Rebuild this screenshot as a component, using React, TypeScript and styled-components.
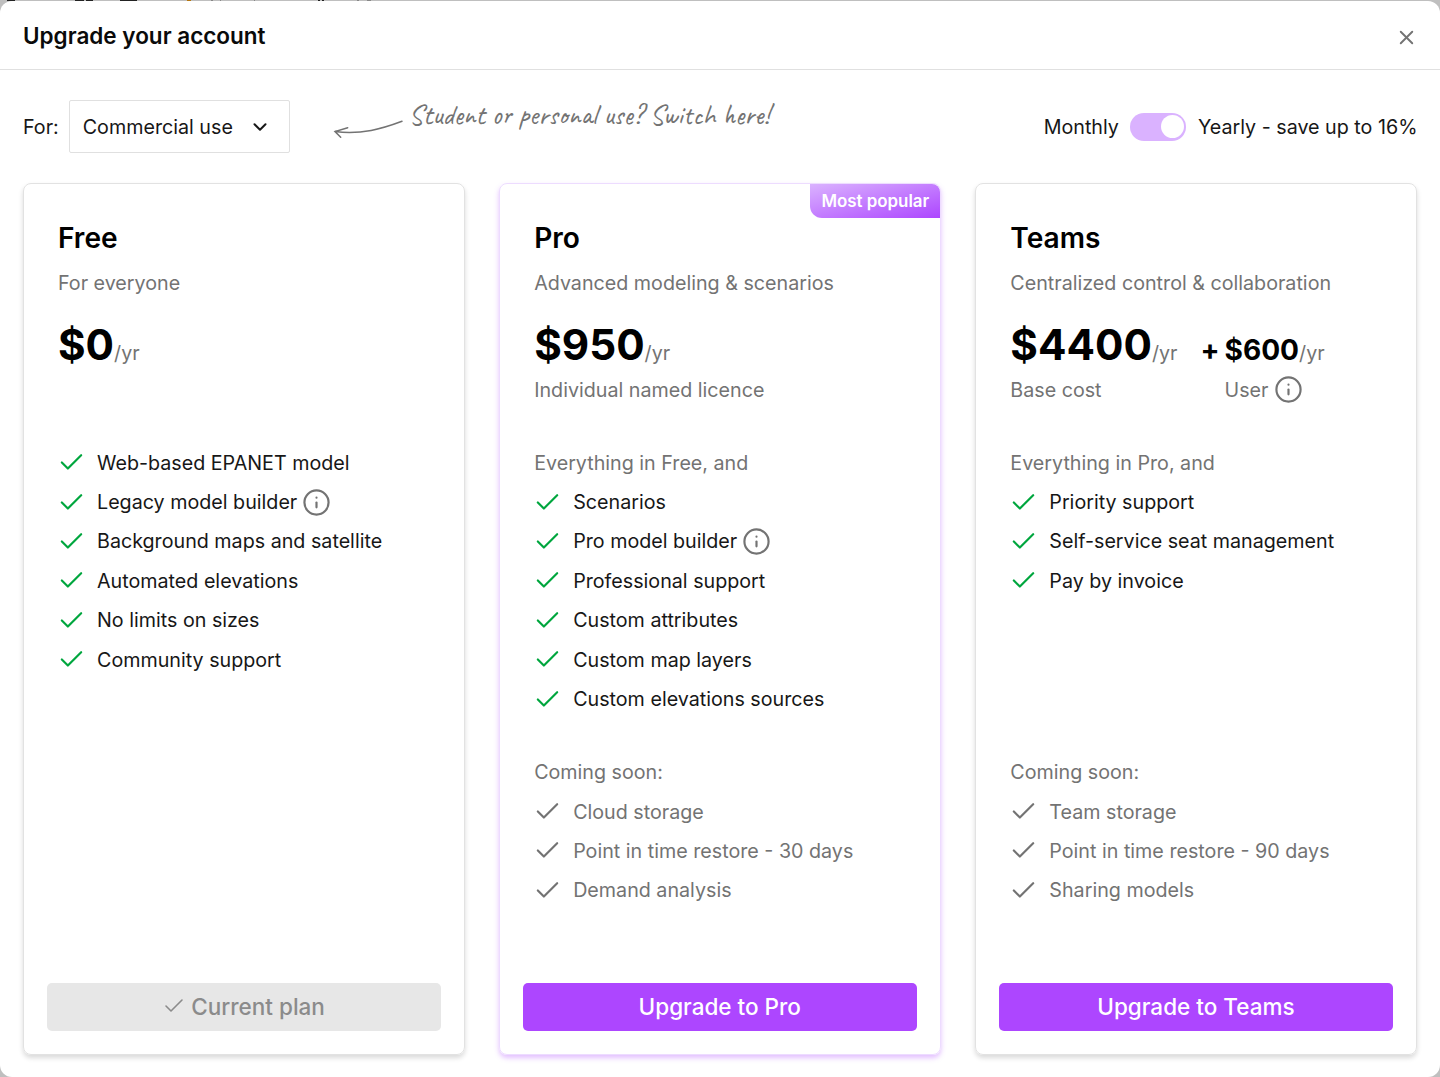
import React from "react";
import styled, { createGlobalStyle } from "styled-components";
import { Check, ChevronDown, Info, X } from "lucide-react";

interface Feature {
  label: string;
  info?: boolean;
}

interface Plan {
  name: string;
  description: string;
  price: string;
  priceNote?: string;
  seatPrice?: string;
  intro?: string;
  features: Feature[];
  upcoming?: string[];
  action: string;
  popular?: boolean;
  current?: boolean;
}

const plans: Plan[] = [
  {
    name: "Free",
    description: "For everyone",
    price: "$0",
    features: [
      { label: "Web-based EPANET model" },
      { label: "Legacy model builder", info: true },
      { label: "Background maps and satellite" },
      { label: "Automated elevations" },
      { label: "No limits on sizes" },
      { label: "Community support" },
    ],
    action: "Current plan",
    current: true,
  },
  {
    name: "Pro",
    description: "Advanced modeling & scenarios",
    price: "$950",
    priceNote: "Individual named licence",
    intro: "Everything in Free, and",
    features: [
      { label: "Scenarios" },
      { label: "Pro model builder", info: true },
      { label: "Professional support" },
      { label: "Custom attributes" },
      { label: "Custom map layers" },
      { label: "Custom elevations sources" },
    ],
    upcoming: [
      "Cloud storage",
      "Point in time restore - 30 days",
      "Demand analysis",
    ],
    action: "Upgrade to Pro",
    popular: true,
  },
  {
    name: "Teams",
    description: "Centralized control & collaboration",
    price: "$4400",
    priceNote: "Base cost",
    seatPrice: "$600",
    intro: "Everything in Pro, and",
    features: [
      { label: "Priority support" },
      { label: "Self-service seat management" },
      { label: "Pay by invoice" },
    ],
    upcoming: [
      "Team storage",
      "Point in time restore - 90 days",
      "Sharing models",
    ],
    action: "Upgrade to Teams",
  },
];

const InfoIcon = () => <Info size={29} strokeWidth={1.8} color={muted} />;

const PlanCard: React.FC<{ plan: Plan }> = ({ plan }) => (
  <Card $popular={plan.popular}>
    {plan.popular && <Badge>Most popular</Badge>}
    <PlanName>{plan.name}</PlanName>
    <Description>{plan.description}</Description>
    <Prices>
      <div>
        <PriceLine>
          <Price>{plan.price}</Price>
          <Period>/yr</Period>
        </PriceLine>
        <PriceNote>{plan.priceNote}</PriceNote>
      </div>
      {plan.seatPrice && (
        <Seat>
          <PriceLine>
            <Plus>+</Plus>
            <Price $small>{plan.seatPrice}</Price>
            <Period>/yr</Period>
          </PriceLine>
          <PriceNote $indent>
            User
            <InfoIcon />
          </PriceNote>
        </Seat>
      )}
    </Prices>
    <Features>
      {plan.intro && <Row $muted>{plan.intro}</Row>}
      {plan.features.map((feature) => (
        <Row key={feature.label}>
          <CheckWrap>
            <Check size={29} strokeWidth={1.8} color="#00a63e" />
          </CheckWrap>
          {feature.label}
          {feature.info && (
            <InfoWrap>
              <InfoIcon />
            </InfoWrap>
          )}
        </Row>
      ))}
    </Features>
    {plan.upcoming && (
      <div>
        <Row $muted>Coming soon:</Row>
        {plan.upcoming.map((label) => (
          <Row key={label} $muted>
            <CheckWrap>
              <Check size={29} strokeWidth={1.8} />
            </CheckWrap>
            {label}
          </Row>
        ))}
      </div>
    )}
    <Action $current={plan.current}>
      {plan.current && <Check size={24} strokeWidth={1.6} />}
      {plan.action}
    </Action>
  </Card>
);

const App: React.FC = () => (
  <>
    <GlobalStyle />
    <Backdrop>
      {/* sliver of the app toolbar showing above the dialog */}
      <ToolbarSliver viewBox="0 0 1440 1">
        <path stroke="#222" d="M7 .5h8M75 .5h9M86 .5h7M120 .5h17M318 .5h2M322 .5h2" />
        <path stroke="#b5750f" d="M187 .5h4" />
        <path stroke="#888" d="M211 .5h2M220 .5h1M254 .5h1M357 .5h2M367 .5h4" />
      </ToolbarSliver>
      <Dialog>
        <Header>
          <Title>Upgrade your account</Title>
          <CloseButton>
            <X size={23} strokeWidth={2} />
          </CloseButton>
        </Header>
        <Toolbar>
          <span>For:</span>
          <Select>
            Commercial use
            <ChevronDown size={22} strokeWidth={2.2} />
          </Select>
          <Arrow viewBox="0 0 70 22">
            <path d="M69 3.3C50 10.5 28 17 2 13.500M14.700 9.700 2 13.500 7.700 19.300" />
          </Arrow>
          <Hint>Student or personal use? Switch here!</Hint>
          <Billing>
            Monthly
            <Switch>
              <Thumb />
            </Switch>
            Yearly - save up to 16%
          </Billing>
        </Toolbar>
        <Cards>
          {plans.map((plan) => (
            <PlanCard key={plan.name} plan={plan} />
          ))}
        </Cards>
      </Dialog>
    </Backdrop>
  </>
);

const muted = "#737373";
const purple = "#ad46ff";

const GlobalStyle = createGlobalStyle`
  * {
    box-sizing: border-box;
  }

  body {
    margin: 0;
    font-family: Inter, sans-serif;
    font-size: 19.7px;
    color: #171717;
    -webkit-font-smoothing: antialiased;
  }

  button {
    font-family: inherit;
    border: none;
  }

  svg {
    flex-shrink: 0;
  }
`;

const Backdrop = styled.div`
  display: flex;
  flex-direction: column;
  height: 1077px;
  overflow: hidden;
  background: #bfbfbf;
`;

const ToolbarSliver = styled.svg`
  display: block;
  width: 1440px;
  height: 1px;
`;

const Dialog = styled.div`
  height: 1076px;
  border-radius: 12px;
  background: #fff;
`;

const Header = styled.div`
  display: flex;
  align-items: center;
  justify-content: space-between;
  height: 69px;
  padding: 0 22px 0 23px;
  border-bottom: 1px solid #e0e0e0;
`;

const Title = styled.div`
  padding-top: 2px;
  font-size: 22.5px;
  line-height: 28px;
  font-weight: 600;
  color: #0a0a0a;
`;

const CloseButton = styled.button`
  display: flex;
  padding: 5px 0 0;
  background: none;
  color: ${muted};
`;

const Toolbar = styled.div`
  display: flex;
  align-items: center;
  height: 113px;
  padding: 0 23px;
`;

const Select = styled.div`
  display: flex;
  align-items: center;
  justify-content: space-between;
  width: 221px;
  height: 53px;
  margin-left: 10px;
  padding: 0 18px 0 13px;
  border: 1px solid #e0e0e0;
  border-radius: 2px;
`;

const Arrow = styled.svg`
  width: 70px;
  height: 22px;
  margin: 5px 0 0 43px;
  fill: none;
  stroke: ${muted};
  stroke-width: 1.5;
  stroke-linecap: round;
`;

const Hint = styled.div`
  margin: 0 0 24px 6px;
  font-family: Caveat, cursive;
  font-size: 28.1px;
  line-height: 28px;
  color: ${muted};
  white-space: nowrap;
`;

const Billing = styled.div`
  display: flex;
  align-items: center;
  gap: 11.5px;
  margin-left: auto;
  margin-right: -0.5px;
  white-space: nowrap;
`;

const Switch = styled.div`
  display: flex;
  justify-content: flex-end;
  width: 56px;
  height: 28px;
  padding: 2.5px;
  border-radius: 14px;
  background: #dab2ff;
`;

const Thumb = styled.div`
  width: 23px;
  height: 23px;
  border-radius: 50%;
  background: #fff;
`;

const Cards = styled.div`
  display: grid;
  grid-template-columns: repeat(3, 1fr);
  gap: 34px;
  height: 872px;
  padding: 0 22.5px 0 23px;
`;

const Card = styled.div<{ $popular?: boolean }>`
  position: relative;
  display: flex;
  flex-direction: column;
  padding: 37px 23px 23px;
  border: 1px solid ${({ $popular }) => ($popular ? "#eddcff" : "#e2e2e2")};
  border-radius: 8px;
  box-shadow: ${({ $popular }) =>
    $popular
      ? "0 3px 5px rgba(173, 70, 255, 0.34)"
      : "0 3px 5px rgba(0, 0, 0, 0.15)"};
`;

const Badge = styled.div`
  position: absolute;
  top: 0;
  right: 0;
  width: 130px;
  height: 34px;
  border-radius: 0 8px 0 12px;
  background: linear-gradient(to bottom right, #dab2ff, ${purple});
  color: #fff;
  font-size: 16.9px;
  line-height: 34px;
  font-weight: 600;
  text-align: center;
`;

const PlanName = styled.div`
  padding-left: 11px;
  font-size: 28.1px;
  line-height: 34px;
  font-weight: 600;
  color: #000;
`;

const Description = styled.div`
  margin-top: 13px;
  padding-left: 11px;
  line-height: 30px;
  color: ${muted};
`;

const Prices = styled.div`
  display: flex;
  height: 126px;
  margin-top: 19px;
  padding-left: 11px;
`;

const PriceLine = styled.div`
  display: flex;
  align-items: baseline;
  height: 56px;
  line-height: 56px;

  /* keeps the small price on the same baseline as the large one */
  &::before {
    content: "\\200b";
    width: 0;
    font-size: 42.2px;
  }
`;

const Price = styled.span<{ $small?: boolean }>`
  font-size: ${({ $small }) => ($small ? "28.1px" : "42.2px")};
  font-weight: 700;
  color: #000;
`;

const Plus = styled.span`
  width: 24px;
  font-size: 28.1px;
  font-weight: 700;
  color: #000;
`;

const Period = styled.span`
  color: ${muted};
`;

const PriceNote = styled.div<{ $indent?: boolean }>`
  display: flex;
  align-items: center;
  gap: 6px;
  height: 30px;
  margin-top: 1.5px;
  padding-left: ${({ $indent }) => ($indent ? "24px" : 0)};
  color: ${muted};
`;

const Seat = styled.div`
  margin-left: 23px;
`;

const Features = styled.div`
  height: 309.5px;
`;

const Row = styled.div<{ $muted?: boolean }>`
  display: flex;
  align-items: center;
  height: 39.4px;
  padding-left: 11px;
  color: ${({ $muted }) => ($muted ? muted : "#171717")};
`;

const CheckWrap = styled.span`
  display: flex;
  width: 40px;
  margin-left: -1px;
`;

const InfoWrap = styled.span`
  display: flex;
  margin-left: 5px;
`;

const Action = styled.button<{ $current?: boolean }>`
  display: flex;
  align-items: center;
  justify-content: center;
  gap: 5px;
  height: 48px;
  margin-top: auto;
  padding: 0 1px 2px 0;
  border-radius: 5px;
  background: ${({ $current }) => ($current ? "#e7e7e7" : purple)};
  color: ${({ $current }) => ($current ? "#8b8b8b" : "#fff")};
  font-size: 22.5px;
  font-weight: 500;
`;

export default App;
